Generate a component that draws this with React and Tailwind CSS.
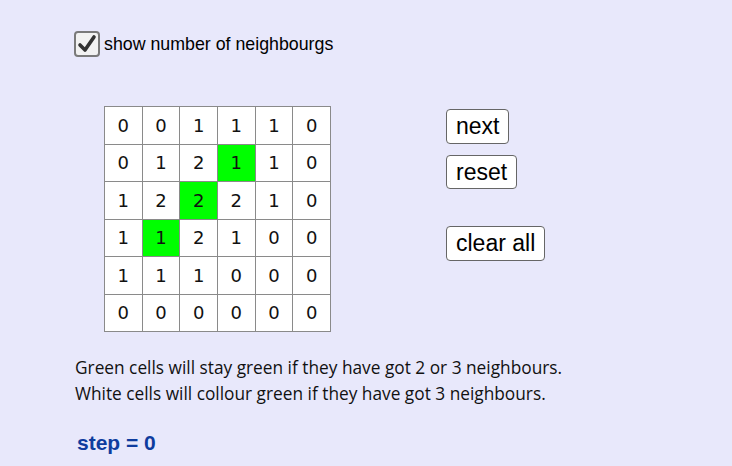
import React, { useState } from "react";

const cells = [
  [0, 0, 1, 1, 1, 0],
  [0, 1, 2, 1, 1, 0],
  [1, 2, 2, 2, 1, 0],
  [1, 1, 2, 1, 0, 0],
  [1, 1, 1, 0, 0, 0],
  [0, 0, 0, 0, 0, 0],
];

const green = ["1-3", "2-2", "3-1"];

const App = () => {
  const [showNumbers, setShowNumbers] = useState(true);

  return (
    <div className="w-[732px] h-[466px] bg-[#e8e8fb] overflow-hidden font-['Liberation_Sans',Arial,sans-serif] text-black">
      {/* checkbox */}
      <div className="flex items-center pl-[74px] pt-[31px] h-[57px]">
        <button
          type="button"
          onClick={() => setShowNumbers(!showNumbers)}
          className="w-[26px] h-[26px] rounded-[4px] border-2 border-[#7a7a7a] bg-[#f2f2f2] flex items-center justify-center"
        >
          {showNumbers && (
            <svg width="20" height="20" viewBox="0 0 20 20">
              <path
                d="M3 11 L8 16 L17 3"
                fill="none"
                stroke="#333"
                strokeWidth="3.6"
                strokeLinecap="round"
                strokeLinejoin="round"
              />
            </svg>
          )}
        </button>
        <span className="ml-[4px] text-[17.8px]">show number of neighbourgs</span>
      </div>

      {/* grid + buttons */}
      <div className="flex pl-[104px] mt-[49px]">
        <div className="w-[227px] h-[226px] grid grid-cols-6 grid-rows-6 border-l border-t border-[#8a8a8a]">
          {cells.map((row, r) =>
            row.map((n, c) => (
              <div
                key={`${r}-${c}`}
                className={`${
                  green.includes(`${r}-${c}`) ? "bg-[#00ff00]" : "bg-white"
                } border-r border-b border-[#8a8a8a] flex items-center justify-center text-[18px] font-['DejaVu_Sans',sans-serif] text-[#111]`}
              >
                {showNumbers ? n : ""}
              </div>
            ))
          )}
        </div>

        <div className="ml-[115px] flex flex-col items-start pt-[3px]">
          <button className="h-[35px] px-[9px] bg-white border border-[#666] rounded-[4px] text-[23px] leading-none">
            next
          </button>
          <button className="mt-[11px] h-[34px] px-[9px] bg-white border border-[#666] rounded-[4px] text-[23px] leading-none">
            reset
          </button>
          <button className="mt-[37px] h-[35px] px-[9px] bg-white border border-[#666] rounded-[4px] text-[23px] leading-none">
            clear all
          </button>
        </div>
      </div>

      {/* text */}
      <div className="pl-[75px] mt-[23px] text-[17.3px] leading-[26px] font-['Open_Sans',sans-serif] text-[#111]">
        <p>Green cells will stay green if they have got 2 or 3 neighbours.</p>
        <p>White cells will collour green if they have got 3 neighbours.</p>
      </div>

      <p className="pl-[77px] mt-[20px] text-[21px] font-bold text-[#0e3c9e]">
        step = 0
      </p>
    </div>
  );
};

export default App;
